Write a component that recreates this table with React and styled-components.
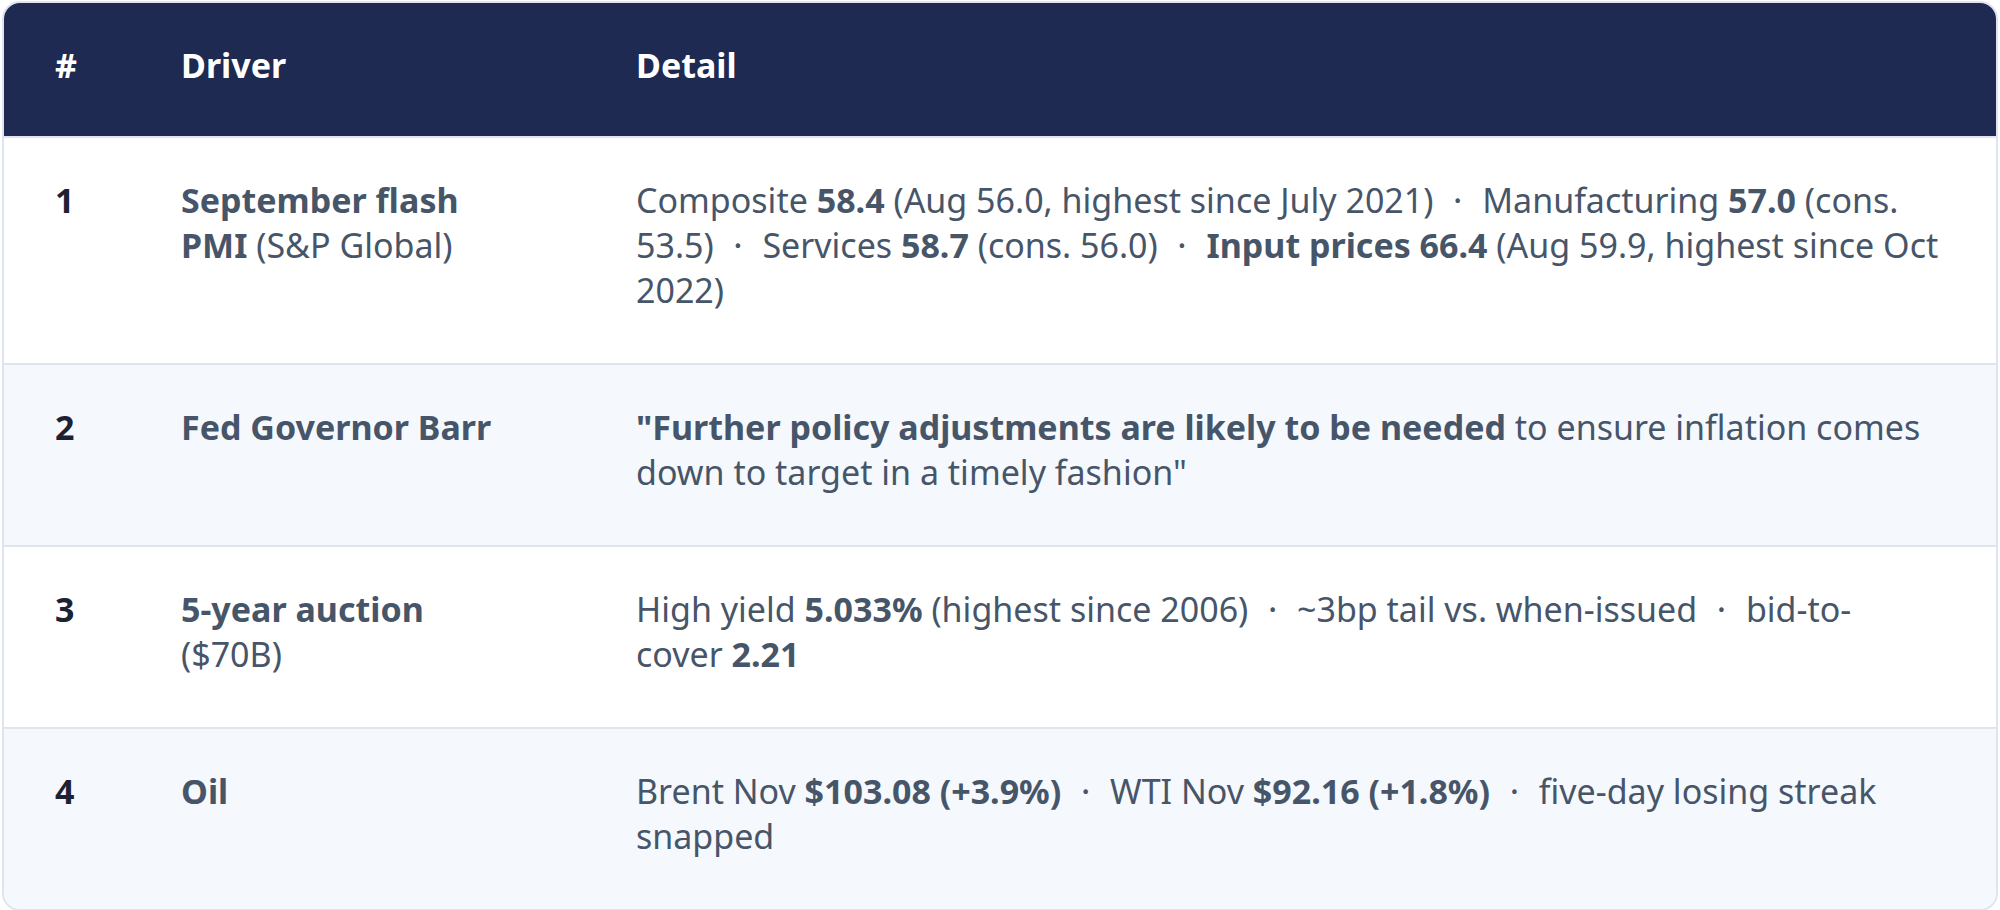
import React from "react";
import styled, { createGlobalStyle } from "styled-components";

const Global = createGlobalStyle`
  html, body { margin: 0; padding: 0; background: #ffffff; }
  body { font-family: "Noto Sans", "Noto Sans CJK KR", sans-serif; }
  * { box-sizing: border-box; }
`;

const Page = styled.div`
  padding: 1px 2px 2px 2px;
  width: 2000px;
`;

const Card = styled.div`
  border: 2px solid #dfe5ef;
  border-radius: 18px;
  overflow: hidden;
  background: #ffffff;
`;

const Table = styled.table`
  width: 100%;
  border-collapse: collapse;
  table-layout: fixed;
  font-size: 34px;
  line-height: 45px;
  color: #475569;
`;

const HeadRow = styled.tr`
  background: #1e2a52;
`;

const Th = styled.th`
  text-align: left;
  font-weight: 700;
  color: #ffffff;
  padding: 40px 0 48px;
  padding-left: ${(p) => (p.$first ? "51px" : "0")};
  vertical-align: top;
`;

const Row = styled.tr`
  background: ${(p) => (p.$alt ? "#f5f8fd" : "#ffffff")};
  border-top: 2px solid #dfe5ef;
`;

const Td = styled.td`
  padding: 40px 0 50px;
  vertical-align: top;
`;

const NumCell = styled(Td)`
  padding-left: 51px;
  font-weight: 700;
  color: #1c2233;
`;

const DriverCell = styled(Td)`
  padding-right: 112px;
`;

const DetailCell = styled(Td)`
  padding-right: 52px;
`;

const Strong = styled.b`
  font-weight: 700;
`;

const Dot = styled.span`
  font-family: "Noto Sans CJK KR", "Noto Sans", sans-serif;
  font-weight: 400;
  line-height: 1;
  margin: 0 6px;
`;

const D = () => <Dot>·</Dot>;

const rows = [
  {
    n: "1",
    driver: (
      <>
        <Strong>September flash PMI</Strong> (S&amp;P Global)
      </>
    ),
    detail: (
      <>
        Composite <Strong>58.4</Strong> (Aug 56.0, highest since July 2021) <D /> Manufacturing{" "}
        <Strong>57.0</Strong> (cons. 53.5) <D /> Services <Strong>58.7</Strong> (cons. 56.0) <D />{" "}
        <Strong>Input prices 66.4</Strong> (Aug 59.9, highest since Oct 2022)
      </>
    ),
  },
  {
    n: "2",
    driver: <Strong>Fed Governor Barr</Strong>,
    detail: (
      <>
        <Strong>"Further policy adjustments are likely to be needed</Strong> to ensure inflation
        comes down to target in a timely fashion"
      </>
    ),
  },
  {
    n: "3",
    driver: (
      <>
        <Strong>5-year auction</Strong> ($70B)
      </>
    ),
    detail: (
      <>
        High yield <Strong>5.033%</Strong> (highest since 2006) <D /> ~3bp tail vs. when-issued{" "}
        <D /> bid-to-
        <br />
        cover <Strong>2.21</Strong>
      </>
    ),
  },
  {
    n: "4",
    driver: <Strong>Oil</Strong>,
    detail: (
      <>
        Brent Nov <Strong>$103.08 (+3.9%)</Strong> <D /> WTI Nov <Strong>$92.16 (+1.8%)</Strong>{" "}
        <D /> five-day losing streak snapped
      </>
    ),
  },
];

export default function App() {
  return (
    <>
      <Global />
      <Page>
        <Card>
          <Table>
            <colgroup>
              <col style={{ width: "177px" }} />
              <col style={{ width: "455px" }} />
              <col />
            </colgroup>
            <thead>
              <HeadRow>
                <Th $first>#</Th>
                <Th>Driver</Th>
                <Th>Detail</Th>
              </HeadRow>
            </thead>
            <tbody>
              {rows.map((r, i) => (
                <Row key={r.n} $alt={i % 2 === 1}>
                  <NumCell>{r.n}</NumCell>
                  <DriverCell>{r.driver}</DriverCell>
                  <DetailCell>{r.detail}</DetailCell>
                </Row>
              ))}
            </tbody>
          </Table>
        </Card>
      </Page>
    </>
  );
}
